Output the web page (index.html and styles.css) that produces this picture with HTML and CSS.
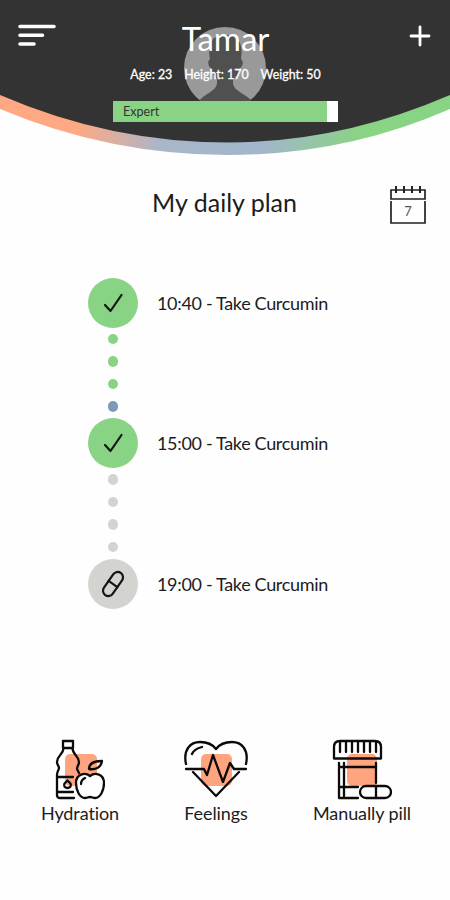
FILE: index.html
```html
<!DOCTYPE html>
<html lang="en">
<head>
    <meta charset="UTF-8">
    <meta name="viewport" content="width=device-width, initial-scale=1.0">
    <title>My daily plan</title>
    <link rel="stylesheet" href="styles.css">
</head>
<body>
    <header class="header">
        <svg class="header-bg" viewBox="0 0 450 160">
            <defs>
                <linearGradient id="rim" x1="0" y1="0" x2="450" y2="0" gradientUnits="userSpaceOnUse">
                    <stop offset="0.17" stop-color="#ffa984"/>
                    <stop offset="0.36" stop-color="#a9b6c9"/>
                    <stop offset="0.58" stop-color="#a3b6cc"/>
                    <stop offset="0.8" stop-color="#89d385"/>
                </linearGradient>
            </defs>
            <path d="M0 0H450V109Q345 155 228 155Q110 155 0 109Z" fill="url(#rim)"/>
            <path d="M0 0H450V95Q340 142.500 228 142.500Q110 142.500 0 95Z" fill="#333"/>
        </svg>
        <!-- avatar placeholder, sits behind the name -->
        <svg class="avatar" viewBox="0 0 82 82">
            <clipPath id="round"><circle cx="41" cy="41" r="41"/></clipPath>
            <g clip-path="url(#round)">
                <rect width="82" height="82" fill="#999"/>
                <path d="M41 8C29 8 23 15 26 32C23 34 24 40 28 42C29 48 31 50 33 52V57C31 65 21 66 14 75V82H69V75C61 66 51 65 49 57V52C52 50 54 47 55 42C59 40 60 34 57 32C60 15 53 8 41 8Z" fill="#505050"/>
            </g>
        </svg>
        <button class="icon-btn" aria-label="Menu">
            <svg width="38" height="24" viewBox="0 0 38 24" stroke="#fff" stroke-width="3.600" stroke-linecap="round">
                <path d="M2 2.500H36M2 11.300H24.500M2 20H16"/>
            </svg>
        </button>
        <div class="profile">
            <h1>Tamar</h1>
            <div class="stats">
                <span>Age: 23</span>
                <span>Height: 170</span>
                <span>Weight: 50</span>
            </div>
            <div class="level">
                <div class="level-fill">Expert</div>
            </div>
        </div>
        <button class="icon-btn add-btn" aria-label="Add">
            <svg width="22" height="22" viewBox="0 0 22 22" stroke="#fff" stroke-width="2.800" stroke-linecap="round">
                <path d="M11 2V20M2 11H20"/>
            </svg>
        </button>
    </header>

    <main>
        <div class="title-row">
            <h2>My daily plan</h2>
            <div class="calendar">
                <svg width="38" height="40" viewBox="0 0 38 40" fill="none" stroke="#222" stroke-width="1.700">
                    <path d="M2 14V5H36V14ZM2 16V38H36V16"/>
                    <path d="M7 1V8M15 1V8M23 1V8M31 1V8" stroke-width="2"/>
                </svg>
                <span class="day">7</span>
            </div>
        </div>

        <div class="plan">
            <div class="step">
                <div class="circle done">
                    <svg width="50" height="50" viewBox="0 0 50 50"><path d="M17 27L22.500 33L33.500 17"/></svg>
                </div>
                <p>10:40 - Take Curcumin</p>
            </div>
            <div class="dots">
                <i class="green"></i><i class="green"></i><i class="green"></i><i class="blue"></i>
            </div>
            <div class="step">
                <div class="circle done">
                    <svg width="50" height="50" viewBox="0 0 50 50"><path d="M17 27L22.500 33L33.500 17"/></svg>
                </div>
                <p>15:00 - Take Curcumin</p>
            </div>
            <div class="dots">
                <i></i><i></i><i></i><i></i>
            </div>
            <div class="step">
                <div class="circle">
                    <svg width="50" height="50" viewBox="0 0 50 50">
                        <g transform="rotate(35 25 25)">
                            <rect x="19.700" y="11.500" width="10.600" height="27" rx="5.300"/>
                            <path d="M19.700 25H30.300"/>
                        </g>
                    </svg>
                </div>
                <p>19:00 - Take Curcumin</p>
            </div>
        </div>
    </main>

    <nav class="actions">
        <a class="action hydration">
            <svg width="50" height="62" viewBox="0 0 50 62">
                <rect class="patch" x="10" y="15" width="32" height="32" rx="5"/>
                <path d="M8 2H18V9H8ZM8.500 9C8.500 16 2 16 2 23C2 26 4 27 4 29C4 31 2 32 2 36V56Q2 59 5 59H19M17.500 9C17.500 16 24 17 24 23C24 26 22 27 22 30L24 34M2 38H18M2 53H18"/>
                <path d="M12.500 41.500L15.500 44.500Q17 48.500 12.500 49Q8 48.500 9.500 44.500Z"/>
                <path d="M35 37C30 33 21 35 21 44C21 52 25 59 30 59C32 59 33 58 35 58C37 58 38 59 40 59C45 59 49 52 49 44C49 35 40 33 35 37Z" class="apple"/>
                <path d="M34 30C34 24 39 22 47 22C46 29 40 31 34 30ZM26 45Q26 41 30 39"/>
            </svg>
            <span>Hydration</span>
        </a>
        <a class="action feelings">
            <svg width="64" height="62" viewBox="0 0 64 62">
                <rect class="patch" x="17" y="15" width="31" height="32" rx="5"/>
                <path d="M2 25C-1 11 6 3 16 3C24 3 29 6 32 10C35 6 40 3 48 3C58 3 65 11 62 25M9 33L32 57L55 33M8 15Q10 10 18 8"/>
                <path d="M2 30H20L23 36L29 16L39 43L46 24L50 30H62"/>
            </svg>
            <span>Feelings</span>
        </a>
        <a class="action pills">
            <svg width="60" height="62" viewBox="0 0 60 62">
                <rect class="patch" x="15" y="15" width="30" height="32" rx="5"/>
                <path d="M2 19.500V8Q2 2 8 2H43Q49 2 49 8V19.500ZM8 3V13M14 3V13M20 3V13M26 3V13M32 3V13M38 3V13M44 3V13"/>
                <path d="M7 24V59H26M7 28H44M44 24V44M7 48H26M12 24V57"/>
                <rect class="capsule" x="28" y="47" width="31" height="12" rx="6"/>
                <path d="M44 47V59"/>
            </svg>
            <span>Manually pill</span>
        </a>
    </nav>
</body>
</html>
```
FILE: styles.css
```css
* {
    margin: 0;
    padding: 0;
    box-sizing: border-box;
}

body {
    width: 450px;
    height: 900px;
    background: #fefefe;
    color: #1c1c1c;
    font-family: Lato, sans-serif;
    font-variant-ligatures: none;
    overflow: hidden;
}

.header {
    position: relative;
    height: 160px;
    padding: 0 18px;
    display: flex;
    justify-content: space-between;
}

.header-bg {
    position: absolute;
    top: 0;
    left: 0;
    width: 450px;
    height: 160px;
}

.avatar {
    position: absolute;
    top: 27px;
    left: 184px;
    width: 82px;
    height: 82px;
}

.icon-btn {
    position: relative;
    width: 38px;
    height: 24px;
    margin-top: 24px;
    border: none;
    background: none;
    text-align: left;
}

.icon-btn svg {
    display: block;
}

.add-btn {
    width: 22px;
    margin-right: 1px;
}

.profile {
    position: relative;
    width: 225px;
    margin-right: 14px;
    padding-top: 19px;
    color: #fff;
    text-align: center;
}

h1 {
    font-size: 33px;
    font-weight: 400;
    line-height: 39px;
}

.stats {
    display: flex;
    justify-content: center;
    gap: 12px;
    margin-top: 8px;
    font-size: 12.4px;
    line-height: 18px;
    white-space: nowrap;
    -webkit-text-stroke: 0.3px #fff;
}

.level {
    height: 21px;
    margin-top: 17px;
    background: #fff;
}

.level-fill {
    width: 214px;
    height: 21px;
    padding-left: 10px;
    background: #89d385;
    color: #333;
    font-size: 12.6px;
    line-height: 21px;
    text-align: left;
}

.title-row {
    display: flex;
    justify-content: flex-end;
    align-items: center;
    gap: 92px;
    height: 48px;
    margin-top: 21px;
    padding-right: 23px;
}

h2 {
    margin-top: -6px;
    font-size: 25px;
    font-weight: 400;
    white-space: nowrap;
}

.calendar {
    position: relative;
    width: 38px;
    height: 40px;
}

.calendar svg {
    display: block;
}

.day {
    position: absolute;
    top: 18px;
    left: 0;
    width: 38px;
    font-size: 13px;
    line-height: 16px;
    text-align: center;
    color: #555;
}

.plan {
    padding: 48.5px 0 0 88px;
}

.step {
    display: flex;
    align-items: center;
    gap: 19px;
    height: 50px;
    font-size: 18px;
    letter-spacing: -0.33px;
}

.step p {
    white-space: nowrap;
}

.circle {
    width: 50px;
    height: 50px;
    border-radius: 50%;
    background: #d3d3d0;
}

.circle svg {
    display: block;
    fill: none;
    stroke: #151515;
    stroke-width: 2.2;
    stroke-linecap: round;
    stroke-linejoin: round;
}

.done {
    background: #89d385;
}

.dots {
    display: flex;
    flex-direction: column;
    align-items: center;
    gap: 12px;
    width: 50px;
    height: 90.5px;
    padding-top: 6px;
}

.dots i {
    flex: none;
    width: 10.6px;
    height: 10.6px;
    border-radius: 50%;
    background: #d3d3d3;
}

.dots .green {
    background: #89d385;
}

.dots .blue {
    background: #7e9aba;
}

.actions {
    display: flex;
    gap: 65px;
    margin-top: 130.5px;
    padding-left: 41px;
}

.action {
    display: flex;
    flex-direction: column;
    align-items: center;
    font-size: 18px;
    letter-spacing: -0.1px;
    line-height: 24px;
    white-space: nowrap;
}

.action svg {
    fill: none;
    stroke: #0b0b0b;
    stroke-width: 2.3;
    stroke-linecap: round;
    stroke-linejoin: round;
}

.action .patch {
    fill: #ffa47f;
    stroke: none;
}

.action .apple,
.action .capsule {
    fill: #fefefe;
}
```
